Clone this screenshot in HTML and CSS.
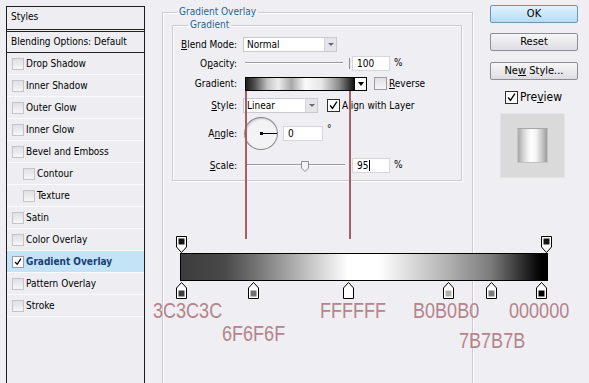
FILE: index.html
```html
<!DOCTYPE html>
<html lang="en">
<head>
    <meta charset="UTF-8">
    <title>Layer Style - Gradient Overlay</title>
    <link rel="stylesheet" href="styles.css">
</head>
<body>
    <div class="dialog">
        <!-- Styles list -->
        <aside class="styles-panel">
            <div class="panel-head">Styles</div>
            <div class="panel-blend">Blending Options: Default</div>
            <ul class="style-list">
                <li><span class="cb"></span>Drop Shadow</li>
                <li><span class="cb"></span>Inner Shadow</li>
                <li><span class="cb"></span>Outer Glow</li>
                <li><span class="cb"></span>Inner Glow</li>
                <li><span class="cb"></span>Bevel and Emboss</li>
                <li class="sub"><span class="cb"></span>Contour</li>
                <li class="sub"><span class="cb"></span>Texture</li>
                <li><span class="cb"></span>Satin</li>
                <li><span class="cb"></span>Color Overlay</li>
                <li class="active"><span class="cb on"><svg viewBox="0 0 12 12"><path d="M2.5 6 L5 8.8 L9.5 2" fill="none" stroke="#000" stroke-width="1.5"/></svg></span>Gradient Overlay</li>
                <li><span class="cb"></span>Pattern Overlay</li>
                <li><span class="cb"></span>Stroke</li>
            </ul>
        </aside>

        <!-- Settings -->
        <fieldset class="group outer">
            <legend>Gradient Overlay</legend>
            <fieldset class="group inner">
                <legend>Gradient</legend>

                <div class="row r-blend">
                    <label><u>B</u>lend Mode:</label>
                    <div class="select w-blend">Normal<span class="arrow"></span></div>
                </div>

                <div class="row r-opacity">
                    <label>O<u>p</u>acity:</label>
                    <div class="slider w-opacity"></div>
                    <span class="tick"></span>
                    <div class="field">100</div>
                    <span class="unit">%</span>
                </div>

                <div class="row r-gradient">
                    <label>Gradient:</label>
                    <div class="swatch"></div>
                    <span class="swatch-arrow"></span>
                    <span class="box rev"></span>
                    <span class="check-label"><u>R</u>everse</span>
                </div>

                <div class="row r-style">
                    <label><u>S</u>tyle:</label>
                    <div class="select w-style">Linear<span class="arrow"></span></div>
                    <span class="box on align"><svg viewBox="0 0 13 13"><path d="M2.5 6.5 L5.3 9.8 L10.5 2" fill="none" stroke="#000" stroke-width="1.6"/></svg></span>
                    <span class="check-label">Align with Layer</span>
                </div>

                <div class="row r-angle">
                    <label>A<u>n</u>gle:</label>
                    <div class="dial"><span class="hand"></span><span class="pivot"></span></div>
                    <div class="field w-angle">0</div>
                    <span class="degree">°</span>
                </div>

                <div class="row r-scale">
                    <label><u>S</u>cale:</label>
                    <div class="slider w-scale">
                        <svg class="knob" viewBox="0 0 8 11"><path d="M0.5 0.5 H7.5 V7 L4 10.5 L0.5 7 Z" fill="#f4f4f6" stroke="#8e8e96"/></svg>
                    </div>
                    <div class="field gap-scale">95<span class="caret"></span></div>
                    <span class="unit">%</span>
                </div>
            </fieldset>

            <!-- Gradient editor with colour notes -->
            <div class="editor">
                <span class="guide" style="left: 95px"></span>
                <span class="guide" style="left: 199px"></span>

                <svg class="stop top" style="left: 26px" viewBox="0 0 11 17"><path d="M0.5 0.5 H10.5 V11 L5.5 16.5 L0.5 11 Z" fill="#fff" stroke="#000"/><rect x="2.5" y="2.5" width="6" height="6" fill="#151515"/></svg>
                <svg class="stop top" style="left: 391px" viewBox="0 0 11 17"><path d="M0.5 0.5 H10.5 V11 L5.5 16.5 L0.5 11 Z" fill="#fff" stroke="#000"/><rect x="2.5" y="2.5" width="6" height="6" fill="#151515"/></svg>

                <div class="bar"></div>

                <svg class="stop bottom" style="left: 26px" viewBox="0 0 11 17"><path d="M5.5 0.5 L10.5 6 V16.5 H0.5 V6 Z" fill="#fff" stroke="#000"/><rect x="2.5" y="8.5" width="6" height="6" fill="#3c3c3c"/></svg>
                <svg class="stop bottom" style="left: 98px" viewBox="0 0 11 17"><path d="M5.5 0.5 L10.5 6 V16.5 H0.5 V6 Z" fill="#fff" stroke="#000"/><rect x="2.5" y="8.5" width="6" height="6" fill="#6f6f6f"/></svg>
                <svg class="stop bottom" style="left: 193px" viewBox="0 0 11 17"><path d="M5.5 0.5 L10.5 6 V16.5 H0.5 V6 Z" fill="#fff" stroke="#000"/></svg>
                <svg class="stop bottom" style="left: 293px" viewBox="0 0 11 17"><path d="M5.5 0.5 L10.5 6 V16.5 H0.5 V6 Z" fill="#fff" stroke="#000"/><rect x="2.5" y="8.5" width="6" height="6" fill="#b0b0b0"/></svg>
                <svg class="stop bottom" style="left: 336px" viewBox="0 0 11 17"><path d="M5.5 0.5 L10.5 6 V16.5 H0.5 V6 Z" fill="#fff" stroke="#000"/><rect x="2.5" y="8.5" width="6" height="6" fill="#7b7b7b"/></svg>
                <svg class="stop bottom" style="left: 386px" viewBox="0 0 11 17"><path d="M5.5 0.5 L10.5 6 V16.5 H0.5 V6 Z" fill="#fff" stroke="#000"/><rect x="2.5" y="8.5" width="6" height="6" fill="#000"/></svg>

                <span class="note" style="left: 3px; top: 68px">3C3C3C</span>
                <span class="note" style="left: 72px; top: 91px">6F6F6F</span>
                <span class="note" style="left: 170px; top: 68px">FFFFFF</span>
                <span class="note" style="left: 263px; top: 68px">B0B0B0</span>
                <span class="note" style="left: 359px; top: 68px">000000</span>
                <span class="note" style="left: 309px; top: 98px">7B7B7B</span>
            </div>
        </fieldset>

        <!-- Buttons -->
        <div class="actions">
            <button class="btn primary">OK</button>
            <button class="btn">Reset</button>
            <button class="btn">Ne<u>w</u> Style...</button>
            <div class="preview-toggle">
                <span class="box on"><svg viewBox="0 0 13 13"><path d="M2.5 6.5 L5.3 9.8 L10.5 2" fill="none" stroke="#000" stroke-width="1.6"/></svg></span>
                <span>Pre<u>v</u>iew</span>
            </div>
            <div class="preview-box">
                <div class="preview-swatch"></div>
            </div>
        </div>
    </div>
</body>
</html>
```

FILE: styles.css
```css
* {
    box-sizing: border-box;
    margin: 0;
    padding: 0;
}

body {
    font-family: "DejaVu Sans Condensed", "DejaVu Sans", sans-serif;
    font-stretch: condensed;
    font-size: 10px;
    color: #000;
    background: #efeff3;
    overflow: hidden;
}

u {
    text-decoration: underline;
    text-underline-offset: 1px;
}

.dialog {
    display: flex;
    align-items: flex-start;
    height: 383px;
}

/* ---- styles list ---- */

.styles-panel {
    flex: none;
    width: 139px;
    height: 400px;
    margin: 6px 0 0 6px;
    border: 1px solid #1c1c1c;
    background: #eeeef2;
}

.panel-head {
    height: 25px;
    padding-left: 4px;
    line-height: 20px;
    border-bottom: 3px double #222;
}

.panel-blend {
    height: 21px;
    padding-left: 4px;
    line-height: 20px;
    border-bottom: 1px solid #222;
}

.style-list {
    list-style: none;
}

.style-list li {
    display: flex;
    align-items: center;
    gap: 2px;
    height: 22px;
    padding-left: 5px;
    border-bottom: 1px solid #fafafc;
}

.style-list li.sub {
    padding-left: 16px;
}

.style-list li.active {
    background: #c3e3f6;
    color: #173f78;
    font-weight: bold;
}

.cb {
    flex: none;
    width: 12px;
    height: 12px;
    border: 1px solid #c4c4ca;
    background: linear-gradient(#e0e0e4, #f6f6f8);
}

.cb.on {
    border-color: #9c9ca4;
    background: #fff;
}

.cb svg,
.box svg {
    display: block;
    width: 100%;
    height: 100%;
}

/* ---- group boxes ---- */

.group {
    border: 1px solid #cbcbd4;
    box-shadow: inset 1px 1px 0 #fff, 1px 1px 0 #fff;
    min-width: 0;
}

.group > legend {
    padding: 0 2px;
    font-size: 10px;
    line-height: 14px;
    color: #25649a;
}

.outer {
    flex: none;
    width: 311px;
    height: 420px;
    margin: 5px 0 0 17px;
    padding: 0 10px 0 9px;
}

.outer > legend {
    margin-left: 5px;
}

.inner {
    margin-top: -1px;
    padding: 3px 0 0 0;
}

.inner > legend {
    margin-left: 15px;
}

/* ---- form rows ---- */

.row {
    display: flex;
    align-items: center;
}

.row > label {
    flex: none;
    width: 64px;
    margin-right: 6px;
    text-align: right;
}

.r-blend { height: 18px; }
.r-opacity { height: 20px; }
.r-gradient { height: 21px; }
.r-style { height: 23px; }
.r-angle { height: 33px; }
.r-scale { height: 30px; }

.select {
    display: flex;
    align-items: center;
    justify-content: space-between;
    height: 15px;
    padding-left: 3px;
    background: #fff;
    border: 1px solid #c9c9d2;
}

.w-blend { width: 94px; }
.w-style { width: 75px; }

.select .arrow {
    display: flex;
    align-items: center;
    justify-content: center;
    width: 12px;
    height: 13px;
    background: #e4e4ea;
    border-left: 1px solid #d4d4dc;
}

.select .arrow::after {
    content: "";
    border-left: 3px solid transparent;
    border-right: 3px solid transparent;
    border-top: 3px solid #6a6a70;
}

.slider {
    position: relative;
    height: 2px;
    margin-left: 2px;
    border-top: 1px solid #9a9aa2;
    border-bottom: 1px solid #fff;
}

.w-opacity { width: 98px; }
.w-scale { width: 100px; }

.tick {
    width: 1px;
    height: 11px;
    margin: 0 2px 0 6px;
    background: #8a8a92;
}

.knob {
    position: absolute;
    left: 56px;
    top: -4px;
    width: 8px;
    height: 11px;
}

.field {
    display: flex;
    align-items: center;
    width: 38px;
    height: 15px;
    padding-left: 4px;
    background: #fff;
    border: 1px solid #d6d6dc;
}

.gap-scale {
    margin-left: 7px;
}

.caret {
    width: 1px;
    height: 11px;
    margin-left: 1px;
    background: #000;
}

.unit {
    margin-left: 4px;
    margin-top: -2px;
}

.swatch {
    width: 110px;
    height: 14px;
    margin-left: 2px;
    border: 1px solid #000;
    background: linear-gradient(to right, #1c1c1c 0%, #505050 8%, #c4c4c4 20%, #ececec 30%, #a8a8a8 42%, #fafafa 55%, #e6e6e6 70%, #8c8c8c 86%, #111 100%);
}

.swatch-arrow {
    display: flex;
    align-items: center;
    justify-content: center;
    width: 12px;
    height: 14px;
    background: #fff;
    border: 1px solid #000;
    border-left: none;
}

.swatch-arrow::after {
    content: "";
    border-left: 3px solid transparent;
    border-right: 3px solid transparent;
    border-top: 4px solid #000;
}

.box {
    flex: none;
    width: 13px;
    height: 13px;
    border: 1px solid #9c9ca2;
    background: linear-gradient(#e0e0e4, #f6f6f8);
}

.box.on {
    border-color: #2e2e2e;
    background: #fff;
}

.rev {
    margin-left: 7px;
}

.align {
    margin-left: 9px;
}

.check-label {
    margin-left: 2px;
}

.dial {
    position: relative;
    width: 34px;
    height: 33px;
    margin-left: 1px;
    border: 1px solid #86868c;
    border-radius: 50%;
    background: #f3f3f5;
    box-shadow: inset 1px 1px 2px #c8c8cc;
}

.dial .hand {
    position: absolute;
    left: 16px;
    top: 15px;
    width: 16px;
    height: 1px;
    background: #000;
}

.dial .pivot {
    position: absolute;
    left: 15px;
    top: 14px;
    width: 3px;
    height: 3px;
    background: #000;
}

.w-angle {
    margin-left: 5px;
    width: 40px;
}

.degree {
    margin-left: 4px;
    margin-top: -10px;
}

/* ---- gradient editor ---- */

.editor {
    position: relative;
    width: 430px;
    height: 140px;
    margin: 51px 0 0 -22px;
    padding-top: 21px;
}

.bar {
    width: 368px;
    height: 28px;
    margin-left: 30px;
    border: 1px solid #000;
    background: linear-gradient(to right, #3c3c3c 0%, #4a4a4a 12%, #6f6f6f 19.7%, #fff 45.6%, #fff 54%, #b0b0b0 73%, #7b7b7b 84.7%, #000 98.4%);
}

.stop {
    position: absolute;
    width: 11px;
    height: 17px;
}

.stop.top {
    top: 4px;
}

.stop.bottom {
    top: 50px;
}

.guide {
    position: absolute;
    top: -141px;
    width: 2px;
    height: 148px;
    background: #a45e68;
}

.note {
    position: absolute;
    font-family: "Liberation Sans", sans-serif;
    font-size: 22px;
    line-height: 22px;
    color: #b5848b;
    transform: scaleX(0.82);
    transform-origin: left top;
}

/* ---- buttons column ---- */

.actions {
    flex: none;
    width: 88px;
    margin: 5px 0 0 17px;
}

.btn {
    display: block;
    width: 88px;
    height: 18px;
    margin-bottom: 10px;
    font-family: inherit;
    font-size: 11px;
    line-height: 16px;
    color: #000;
    text-align: center;
    border: 1px solid #8d8d96;
    border-radius: 2px;
    background: linear-gradient(#f7f7f9, #dcdce2);
}

.btn.primary {
    border-color: #6b94b8;
    background: linear-gradient(#dff2fd, #b6dcf3);
}

.btn:nth-child(2) {
    margin-bottom: 11px;
}

.preview-toggle {
    display: flex;
    align-items: center;
    gap: 2px;
    margin: 8px 0 0 15px;
    font-size: 12px;
}

.preview-box {
    display: flex;
    align-items: center;
    justify-content: center;
    width: 65px;
    height: 65px;
    margin: 9px 0 0 10px;
    background: #dadada;
    border: 1px solid #e4e4e6;
}

.preview-swatch {
    width: 31px;
    height: 35px;
    border: 1px solid #c4c4c4;
    border-top-color: #a8a8a8;
    background: linear-gradient(to right, #a8a8a8, #e0e0e0 25%, #fff 45%, #f4f4f4 62%, #c2c2c2 85%, #9c9c9c);
}
```
